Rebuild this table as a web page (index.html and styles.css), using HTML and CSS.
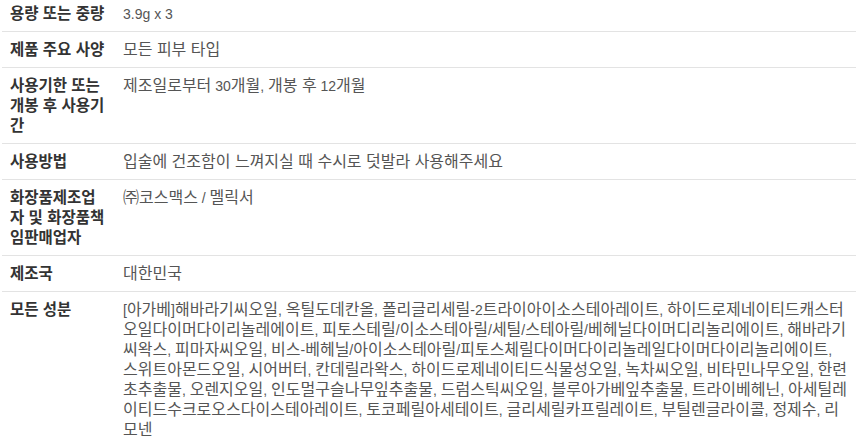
FILE: index.html
```html
<!DOCTYPE html>
<html lang="ko">
<head>
<meta charset="utf-8">
<link rel="stylesheet" href="styles.css">
</head>
<body>
<table class="spec">
  <colgroup><col class="col-label"><col class="col-value"></colgroup>
  <tbody>
    <tr><th>용량 또는 중량</th><td><span class="l">3.9g x 3</span></td></tr>
    <tr><th>제품 주요 사양</th><td>모든 피부 타입</td></tr>
    <tr><th>사용기한 또는 개봉 후 사용기간</th><td>제조일로부터<span class="l"> 30</span>개월<span class="l">, </span>개봉 후<span class="l"> 12</span>개월</td></tr>
    <tr><th>사용방법</th><td>입술에 건조함이 느껴지실 때 수시로 덧발라 사용해주세요</td></tr>
    <tr><th>화장품제조업자 및 화장품책임판매업자</th><td>㈜코스맥스<span class="l"> / </span>멜릭서</td></tr>
    <tr><th>제조국</th><td>대한민국</td></tr>
    <tr><th>모든 성분</th><td><span class="l">[</span>아가베<span class="l">]</span>해바라기씨오일<span class="l">, </span>옥틸도데칸올<span class="l">, </span>폴리글리세릴<span class="l">-2</span>트라이아이소스테아레이트<span class="l">, </span>하이드로제네이티드캐스터오일다이머다이리놀레에이트<span class="l">, </span>피토스테릴<span class="l">/</span>이소스테아릴<span class="l">/</span>세틸<span class="l">/</span>스테아릴<span class="l">/</span>베헤닐다이머디리놀리에이트<span class="l">, </span>해바라기씨왁스<span class="l">, </span>피마자씨오일<span class="l">, </span>비스<span class="l">-</span>베헤닐<span class="l">/</span>아이소스테아릴<span class="l">/</span>피토스체릴다이머다이리놀레일다이머다이리놀리에이트<span class="l">, </span>스위트아몬드오일<span class="l">, </span>시어버터<span class="l">, </span>칸데릴라왁스<span class="l">, </span>하이드로제네이티드식물성오일<span class="l">, </span>녹차씨오일<span class="l">, </span>비타민나무오일<span class="l">, </span>한련초추출물<span class="l">, </span>오렌지오일<span class="l">, </span>인도멀구슬나무잎추출물<span class="l">, </span>드럼스틱씨오일<span class="l">, </span>블루아가베잎추출물<span class="l">, </span>트라이베헤닌<span class="l">, </span>아세틸레이티드수크로오스다이스테아레이트<span class="l">, </span>토코페릴아세테이트<span class="l">, </span>글리세릴카프릴레이트<span class="l">, </span>부틸렌글라이콜<span class="l">, </span>정제수<span class="l">, </span>리모넨</td></tr>
  </tbody>
</table>
</body>
</html>
```

FILE: styles.css
```css
html, body {
  margin: 0;
  padding: 0;
  background: #ffffff;
}

body {
  font-family: "Liberation Sans", "Noto Sans CJK KR", sans-serif;
  font-size: 16px;
  line-height: 20px;
}

.spec {
  width: 854px;
  margin: -4px 0 0 2px;
  border-collapse: collapse;
  table-layout: fixed;
}

.col-label {
  width: 113px;
}

.spec tr {
  border-bottom: 1px solid #e3e3e3;
}

.spec tr:last-child {
  border-bottom: none;
}

.spec th,
.spec td {
  padding: 8px 0 7px;
  vertical-align: top;
  text-align: left;
}

.spec th {
  padding-left: 8px;
  padding-right: 8px;
  font-size: 15.5px;
  font-weight: bold;
  color: #333333;
}

.spec td {
  padding-left: 8px;
  padding-right: 8px;
  color: #555555;
}

.l {
  font-family: "Liberation Sans", sans-serif;
  font-size: 14px;
  line-height: 1;
}
```
